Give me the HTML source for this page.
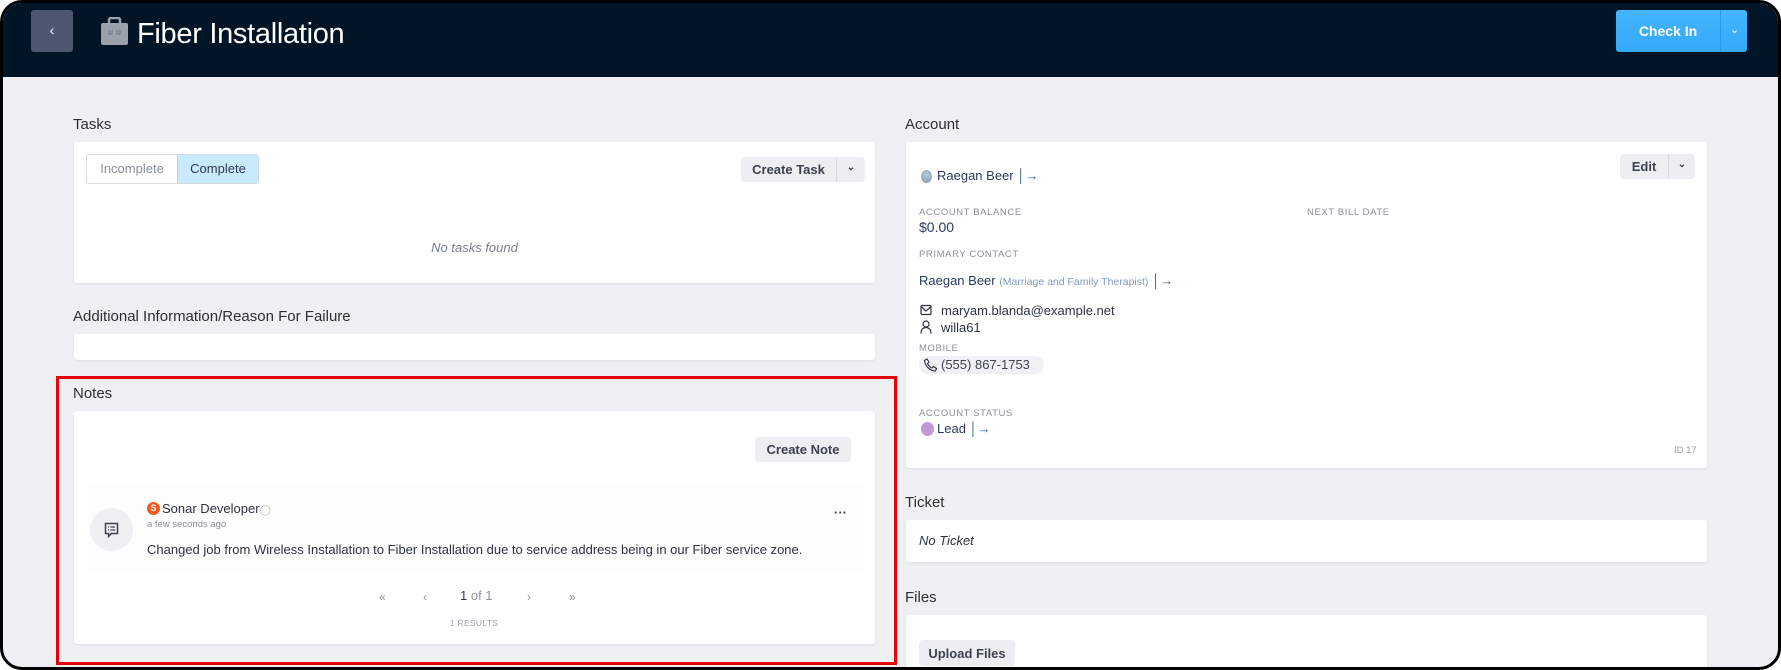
<!DOCTYPE html>
<html><head><meta charset="utf-8"><style>
*{box-sizing:border-box;margin:0;padding:0}
body{width:1781px;height:670px;background:#fff;font-family:"Liberation Sans",sans-serif;overflow:hidden;position:relative}
#f{position:absolute;left:0;top:0;width:1781px;height:670px;border:3px solid #000;border-radius:22px;overflow:hidden;background:#eef0f3}
#c{position:absolute;left:0;top:-2px;width:100%;height:100%}
.a{position:absolute}
.hdr{left:0;top:0;width:100%;height:74px;background:#021526}
.card{background:#fff;border-radius:3px;box-shadow:0 1px 2px rgba(0,0,0,.08)}
.lbl{font-size:15px;color:#2a2f38}
.btn{background:#eceef2;border-radius:4px;font-size:13px;font-weight:bold;color:#3c4350;display:flex;align-items:center}
.cap{font-size:9.5px;letter-spacing:.6px;color:#8a909a}
.t{font-size:13px;color:#2c3240}
.arr{color:#2f5d8a;font-size:13px;font-weight:bold}
</style></head><body>
<div id="f">
<div class="a hdr"></div>
<div class="a" style="left:28px;top:7px;width:42px;height:42px;background:#4d5870;border-radius:3px;color:#fff;font-size:14px;text-align:center;line-height:40px">&#8249;</div>
<svg class="a" style="left:97px;top:14px" width="29" height="29" viewBox="0 0 29 29"><rect x="9" y="1" width="11" height="7" rx="2" fill="none" stroke="#9aa1ab" stroke-width="2.5"/><rect x="1" y="6" width="27" height="22" rx="2" fill="#9aa1ab"/><path d="M9 13v4h3v-4M17 13v4h3v-4" stroke="#6d7580" stroke-width="1" fill="none"/></svg>
<div class="a" style="left:134px;top:15px;color:#fff;font-size:29px;letter-spacing:-.3px">Fiber Installation</div>
<div class="a" style="left:1613px;top:7px;width:131px;height:42px;background:linear-gradient(#44b4ff,#33aaf8);border-radius:3px"></div>
<div class="a" style="left:1717px;top:7px;width:1px;height:42px;background:#2a9ae6"></div>
<div class="a" style="left:1613px;top:20px;width:104px;text-align:center;color:#fff;font-weight:bold;font-size:14px">Check In</div>
<div class="a" style="left:1727px;top:20px;color:#fff;font-size:11px">&#8964;</div>
<div id="c">
<div class="a lbl" style="left:70px;top:115px">Tasks</div>
<div class="a card" style="left:71px;top:141px;width:801px;height:141px"></div>
<div class="a" style="left:83px;top:153px;width:173px;height:30px;border:1px solid #d6dbe2;border-radius:3px;overflow:hidden;display:flex;font-size:13px">
<div style="width:90px;line-height:28px;text-align:center;color:#8a909a">Incomplete</div>
<div style="flex:1;background:#c9eafd;line-height:28px;text-align:center;color:#2c3a4c;border-left:1px solid #a8d8f5">Complete</div></div>
<div class="a btn" style="left:738px;top:156px;width:124px;height:25px"><span style="width:95px;text-align:center">Create Task</span><span style="border-left:1px solid #d8dbe0;height:25px;flex:1;text-align:center;line-height:22px;font-size:10px">&#8964;</span></div>
<div class="a" style="left:71px;top:239px;width:801px;text-align:center;font-style:italic;font-size:13px;color:#7a808a">No tasks found</div>

<div class="a lbl" style="left:70px;top:307px">Additional Information/Reason For Failure</div>
<div class="a card" style="left:71px;top:333px;width:801px;height:26px"></div>

<div class="a" style="left:53px;top:375px;width:841px;height:289px;border:3px solid #e8000b"></div>
<div class="a lbl" style="left:70px;top:384px">Notes</div>
<div class="a card" style="left:71px;top:410px;width:801px;height:233px"></div>
<div class="a btn" style="left:752px;top:436px;width:96px;height:25px;justify-content:center">Create Note</div>
<div class="a" style="left:85px;top:485px;width:775px;height:85px;background:#fdfdfd"></div>
<div class="a" style="left:87px;top:507px;width:43px;height:43px;border-radius:50%;background:#eef0f3"></div>
<svg class="a" style="left:101px;top:521px" width="15" height="16" viewBox="0 0 15 16"><path d="M1.5 1.5h12v10h-6l-3 3v-3h-3z" fill="none" stroke="#3c4350" stroke-width="1.5"/><path d="M4 5h1M6.5 5h4.5M4 8h1M6.5 8h4.5" stroke="#3c4350" stroke-width="1.3"/></svg>
<div class="a" style="left:144px;top:501px;width:13px;height:13px;border-radius:50%;background:#f05a22;color:#fff;font-size:9px;font-weight:bold;text-align:center;line-height:13px">S</div>
<div class="a t" style="left:159px;top:500px">Sonar Developer<span style="color:#b0b5bd;font-size:10px">&#9711;</span></div>
<div class="a" style="left:144px;top:518px;font-size:9.5px;color:#8a909a">a few seconds ago</div>
<div class="a" style="left:831px;top:504px;font-size:13px;color:#3c4350;font-weight:bold">&middot;&middot;&middot;</div>
<div class="a t" style="left:144px;top:541px">Changed job from Wireless Installation to Fiber Installation due to service address being in our Fiber service zone.</div>
<div class="a" style="left:376px;top:589px;font-size:12px;color:#8a909a">&laquo;</div>
<div class="a" style="left:420px;top:589px;font-size:12px;color:#8a909a">&#8249;</div>
<div class="a" style="left:457px;top:587px;font-size:13px;color:#2c3a5c">1 <span style="color:#8a909a">of 1</span></div>
<div class="a" style="left:524px;top:589px;font-size:12px;color:#8a909a">&#8250;</div>
<div class="a" style="left:566px;top:589px;font-size:12px;color:#8a909a">&raquo;</div>
<div class="a" style="left:434px;top:617px;width:74px;text-align:center;font-size:8.5px;color:#9aa0a8;letter-spacing:.3px">1 RESULTS</div>

<div class="a lbl" style="left:902px;top:115px">Account</div>
<div class="a card" style="left:903px;top:141px;width:801px;height:326px"></div>
<div class="a btn" style="left:1617px;top:153px;width:75px;height:25px"><span style="width:48px;text-align:center">Edit</span><span style="border-left:1px solid #d8dbe0;height:25px;flex:1;text-align:center;line-height:22px;font-size:10px">&#8964;</span></div>
<div class="a" style="left:918px;top:169px;width:11px;height:13px;border-radius:50%;background:radial-gradient(circle at 50% 35%,#b9c9d8,#7f97ad)"></div>
<div class="a t" style="left:934px;top:167px;color:#2c3a5c">Raegan Beer <span class="arr">&#9474;&#8594;</span></div>
<div class="a cap" style="left:916px;top:206px">ACCOUNT BALANCE</div>
<div class="a cap" style="left:1304px;top:206px">NEXT BILL DATE</div>
<div class="a" style="left:916px;top:218px;font-size:14px;color:#2c3a5c">$0.00</div>
<div class="a cap" style="left:916px;top:248px">PRIMARY CONTACT</div>
<div class="a t" style="left:916px;top:272px;color:#2c3a5c">Raegan Beer <span style="font-size:10.5px;color:#7f9bb8">(Marriage and Family Therapist)</span> <span class="arr">&#9474;&#8594;</span></div>
<svg class="a" style="left:917px;top:303px" width="12" height="12" viewBox="0 0 12 12"><rect x="1" y="1.5" width="10" height="9" rx="1" fill="none" stroke="#2c3240" stroke-width="1.2"/><path d="M1.5 3l4.5 4 4.5-4" fill="none" stroke="#2c3240" stroke-width="1.2"/></svg>
<div class="a t" style="left:938px;top:302px">maryam.blanda@example.net</div>
<svg class="a" style="left:917px;top:319px" width="12" height="14" viewBox="0 0 12 14"><circle cx="6" cy="4" r="3" fill="none" stroke="#2c3240" stroke-width="1.2"/><path d="M1 13.5c0-4 2-6 5-6s5 2 5 6" fill="none" stroke="#2c3240" stroke-width="1.2"/></svg>
<div class="a t" style="left:938px;top:319px">willa61</div>
<div class="a cap" style="left:916px;top:342px">MOBILE</div>
<div class="a" style="left:916px;top:355px;width:125px;height:18px;border-radius:9px;background:#f0f1f4"></div>
<svg class="a" style="left:921px;top:357px" width="13" height="14" viewBox="0 0 13 14"><path d="M3 1l2 3-1.5 1.5c.8 2 2.5 3.7 4.5 4.5L9.5 8.5l3 2-1 2.5C6 13 1 8 .5 2.5z" fill="none" stroke="#2c3240" stroke-width="1.1"/></svg>
<div class="a t" style="left:938px;top:356px;color:#3c4350">(555) 867-1753</div>
<div class="a cap" style="left:916px;top:407px">ACCOUNT STATUS</div>
<div class="a" style="left:918px;top:421px;width:13px;height:14px;border-radius:50%;background:#c19ad6"></div>
<div class="a t" style="left:934px;top:420px;color:#2c3a5c">Lead <span class="arr">&#9474;&#8594;</span></div>
<div class="a" style="left:1671px;top:444px;font-size:9.5px;color:#9aa0a8">ID 17</div>

<div class="a lbl" style="left:902px;top:493px">Ticket</div>
<div class="a card" style="left:903px;top:519px;width:801px;height:42px"></div>
<div class="a t" style="left:916px;top:532px;font-style:italic">No Ticket</div>
<div class="a lbl" style="left:902px;top:588px">Files</div>
<div class="a card" style="left:903px;top:614px;width:801px;height:60px"></div>
<div class="a btn" style="left:916px;top:639px;width:96px;height:26px;justify-content:center">Upload Files</div>
</div>
</div>
</body></html>
